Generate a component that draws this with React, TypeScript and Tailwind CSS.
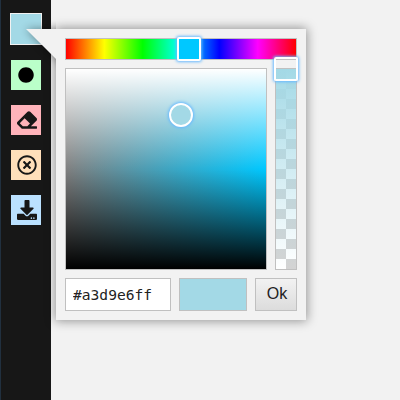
import React from "react";
import { FaCircle, FaDownload, FaEraser, FaRegTimesCircle } from "react-icons/fa";

const tools = [
  { name: "brush", tile: "bg-[#baffc9]", icon: <FaCircle className="size-4 text-black" /> },
  { name: "eraser", tile: "bg-[#ffb3ba]", icon: <FaEraser className="ml-[2px] size-5" /> },
  { name: "clear", tile: "bg-[#ffdfba]", icon: <FaRegTimesCircle className="ml-[2px] size-5" /> },
  { name: "download", tile: "bg-[#bae1ff]", icon: <FaDownload className="ml-[2px] size-5" /> },
];

export default function App() {
  return (
    <div className="relative flex h-[400px] w-[400px] overflow-hidden bg-[#f2f2f2] text-[#171717]">
      <aside className="flex w-[51px] flex-col items-center gap-[15px] border-l border-[#21303f] bg-[#171717] pt-[13px]">
        <div className="-ml-px h-[32px] w-[32px] shrink-0 border border-[#f2f2f2] bg-[#a3d9e6]" />
        {tools.map((t) => (
          <button key={t.name} aria-label={t.name} className={`flex size-[30px] shrink-0 items-center justify-center ${t.tile}`}>
            {t.icon}
          </button>
        ))}
      </aside>

      <div className="absolute left-[56px] top-[29px] w-[250px]">
        <div className="absolute inset-0 shadow-[0_0_10px_1px_rgba(0,0,0,0.4)]" />
        <svg className="absolute -left-[50px] -top-[20px] h-[70px] w-[60px]" viewBox="0 0 60 70">
          <defs>
            <filter id="soft" x="-50%" y="-50%" width="200%" height="200%">
              <feGaussianBlur stdDeviation="4" />
            </filter>
            <clipPath id="side">
              <rect width="50" height="70" />
            </clipPath>
          </defs>
          <g clipPath="url(#side)">
            <path d="M20 20H80V80z" opacity="0.4" filter="url(#soft)" />
          </g>
          <path d="M20 20H60V60z" fill="#f2f2f2" />
        </svg>

        <div className="relative flex h-[291px] flex-col gap-2 bg-[#f2f2f2] p-[9px]">
          <div className="relative h-[22px] border border-[#c0c0c0] bg-[linear-gradient(90deg,red,yellow,lime,cyan,blue,magenta,red)]">
            <div className="absolute -top-[2px] left-[111px] size-6 rounded-[2px] border-2 border-white bg-[#00c8ff] shadow-[0_0_3px_1px_#67b9ff]" />
          </div>

          <div className="flex h-[202px] gap-2">
            <div className="relative w-[202px] border border-[#c0c0c0] bg-[linear-gradient(180deg,white,rgba(255,255,255,0)_50%),linear-gradient(0deg,black,rgba(0,0,0,0)_50%),linear-gradient(90deg,gray,rgba(128,128,128,0))] bg-[#00c8ff]">
              <div className="absolute left-[103px] top-[34px] size-6 rounded-full border-2 border-white bg-[#a3d9e6] shadow-[0_0_3px_1px_#67b9ff]" />
            </div>
            <div className="relative w-[22px] border border-[#c0c0c0] bg-[linear-gradient(#a3d9e6,rgba(163,217,230,0)),conic-gradient(white_25%,lightgray_0_50%,white_0_75%,lightgray_0)] bg-[size:100%_100%,20px_20px]">
              <div className="absolute -left-[2px] -top-[12px] size-6 rounded-[2px] border-2 border-white shadow-[0_0_3px_1px_#67b9ff]" />
            </div>
          </div>

          <div className="flex h-[33px] gap-2">
            <input
              readOnly
              value="#a3d9e6ff"
              className="w-[106px] border border-[#c0c0c0] bg-white pl-[7px] pr-0 font-['DejaVu_Sans_Mono',monospace] text-[14.6px] text-[#222] outline-none"
            />
            <div className="w-[68px] border border-[#c0c0c0] bg-[#a3d9e6]" />
            <button className="w-[42px] border border-[#c0c0c0] bg-linear-to-b from-[#f2f2f2] to-[#dcdcdc] pb-[2px] pl-[2px] font-['Liberation_Sans',sans-serif] text-base text-[#222]">
              Ok
            </button>
          </div>
        </div>
      </div>
    </div>
  );
}
